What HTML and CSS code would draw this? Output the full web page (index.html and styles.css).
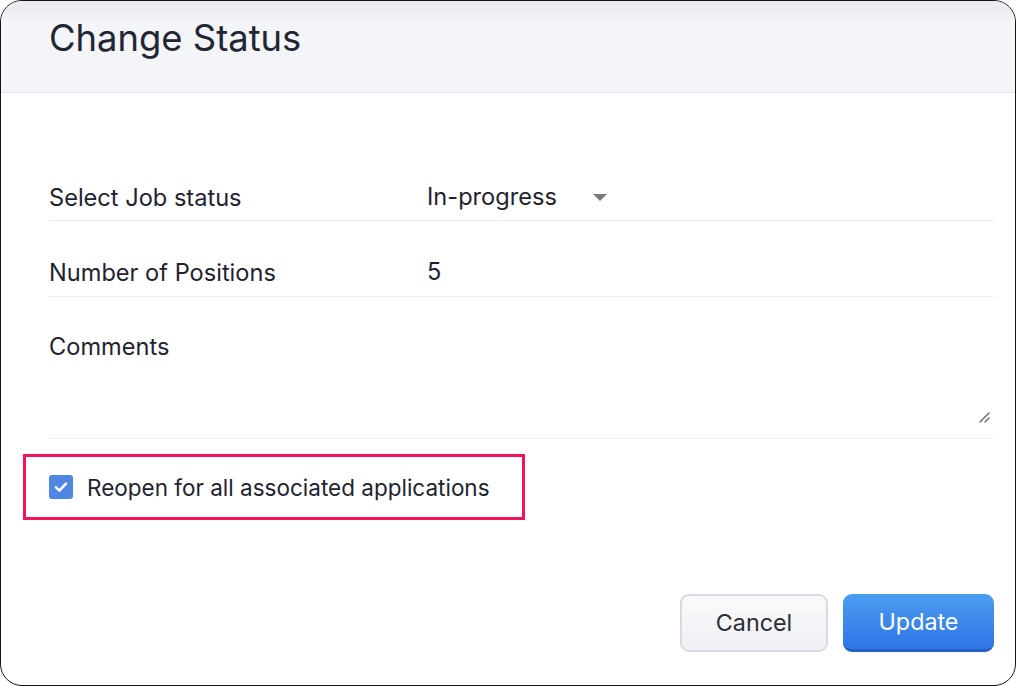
FILE: index.html
```html
<!DOCTYPE html>
<html>
<head>
<meta charset="utf-8">
<link rel="stylesheet" href="styles.css">
</head>
<body>
<div class="dialog">
  <div class="header">
    <h1 class="title">Change Status</h1>
  </div>
  <div class="content">
    <div class="form">
      <div class="row">
        <div class="label">Select Job status</div>
        <div class="value select">
          <span>In-progress</span>
          <svg class="caret" width="14" height="7" viewBox="0 0 14 7"><path d="M0 0 L14 0 L7 7 Z" fill="#7a7a7a"/></svg>
        </div>
      </div>
      <div class="row second">
        <div class="label">Number of Positions</div>
        <div class="value">5</div>
      </div>
      <div class="row comments">
        <div class="label">Comments</div>
        <div class="grip">
          <svg width="14" height="14" viewBox="0 0 14 14"><path d="M13 4 L4 13 M13 9 L9 13" stroke="#6f6f6f" stroke-width="1.5" stroke-linecap="round"/></svg>
        </div>
      </div>
    </div>
    <div class="highlight">
      <span class="checkbox">
        <svg width="18" height="18" viewBox="0 0 18 18"><path d="M4 9.4 L7.4 12.6 L14 5.6" fill="none" stroke="#fff" stroke-width="2.6" stroke-linecap="round" stroke-linejoin="round"/></svg>
      </span>
      <span class="check-label">Reopen for all associated applications</span>
    </div>
    <div class="actions">
      <button class="btn cancel">Cancel</button>
      <button class="btn update">Update</button>
    </div>
  </div>
</div>
</body>
</html>
```

FILE: styles.css
```css
html, body {
  margin: 0;
  padding: 0;
  background: #ffffff;
}
body {
  font-family: Inter, "Noto Sans", sans-serif;
  color: #1f2330;
}
.dialog {
  width: 1016px;
  height: 686px;
  box-sizing: border-box;
  border: 1.5px solid #151515;
  border-radius: 22px;
  overflow: hidden;
  background: #ffffff;
  display: flex;
  flex-direction: column;
}
.header {
  height: 92px;
  box-sizing: border-box;
  background: linear-gradient(#e9eaee 0px, #f4f5f9 22px, #f4f5f9 100%);
  border-bottom: 1px solid #e2e5eb;
  padding: 15px 0 0 48px;
}
.title {
  margin: 0;
  font-weight: 400;
  font-size: 36.4px;
  line-height: 44px;
  color: #222632;
}
.content {
  flex: 1;
  display: flex;
  flex-direction: column;
  padding: 0 21px 0 48px;
}
.form {
  padding-top: 53px;
}
.row {
  display: flex;
  align-items: flex-end;
  height: 75px;
  box-sizing: border-box;
  border-bottom: 1.5px solid #eceef1;
  padding-bottom: 8px;
  font-size: 23.6px;
  line-height: 28px;
}
.row.second {
  height: 76px;
  padding-bottom: 9px;
}
.label {
  width: 378px;
  flex: none;
}
.value {
  display: flex;
  align-items: center;
  padding-bottom: 1px;
}
.caret {
  margin-left: 36px;
}
.row.comments {
  height: 142px;
  flex-direction: column;
  align-items: stretch;
  justify-content: space-between;
  padding-top: 36px;
  padding-bottom: 15px;
}
.grip {
  align-self: flex-end;
  height: 14px;
  margin-right: 4px;
}
.grip svg {
  display: block;
}
.highlight {
  margin-top: 15px;
  margin-left: -26px;
  width: 502px;
  height: 66px;
  box-sizing: border-box;
  border: 3px solid #f3145b;
  display: flex;
  align-items: center;
  padding-left: 23px;
}
.checkbox {
  width: 24px;
  height: 24px;
  border-radius: 3px;
  background: #4f87e3;
  display: flex;
  align-items: center;
  justify-content: center;
}
.check-label {
  margin-left: 14px;
  font-size: 22.5px;
  color: #1f2330;
}
.actions {
  margin-top: 74px;
  display: flex;
  justify-content: flex-end;
  gap: 15px;
}
.btn {
  height: 58px;
  border-radius: 9px;
  font-family: Inter, "Noto Sans", sans-serif;
  font-size: 23.3px;
  cursor: pointer;
}
.cancel {
  width: 148px;
  background: linear-gradient(#fafafc, #eef0f4);
  border: 2px solid #d8dae1;
  color: #2a2d35;
  padding-bottom: 2px;
}
.update {
  width: 151px;
  background: linear-gradient(#4b9df0, #2f74e6);
  border: none;
  border-bottom: 3px solid #2560c6;
  color: #ffffff;
}
```
